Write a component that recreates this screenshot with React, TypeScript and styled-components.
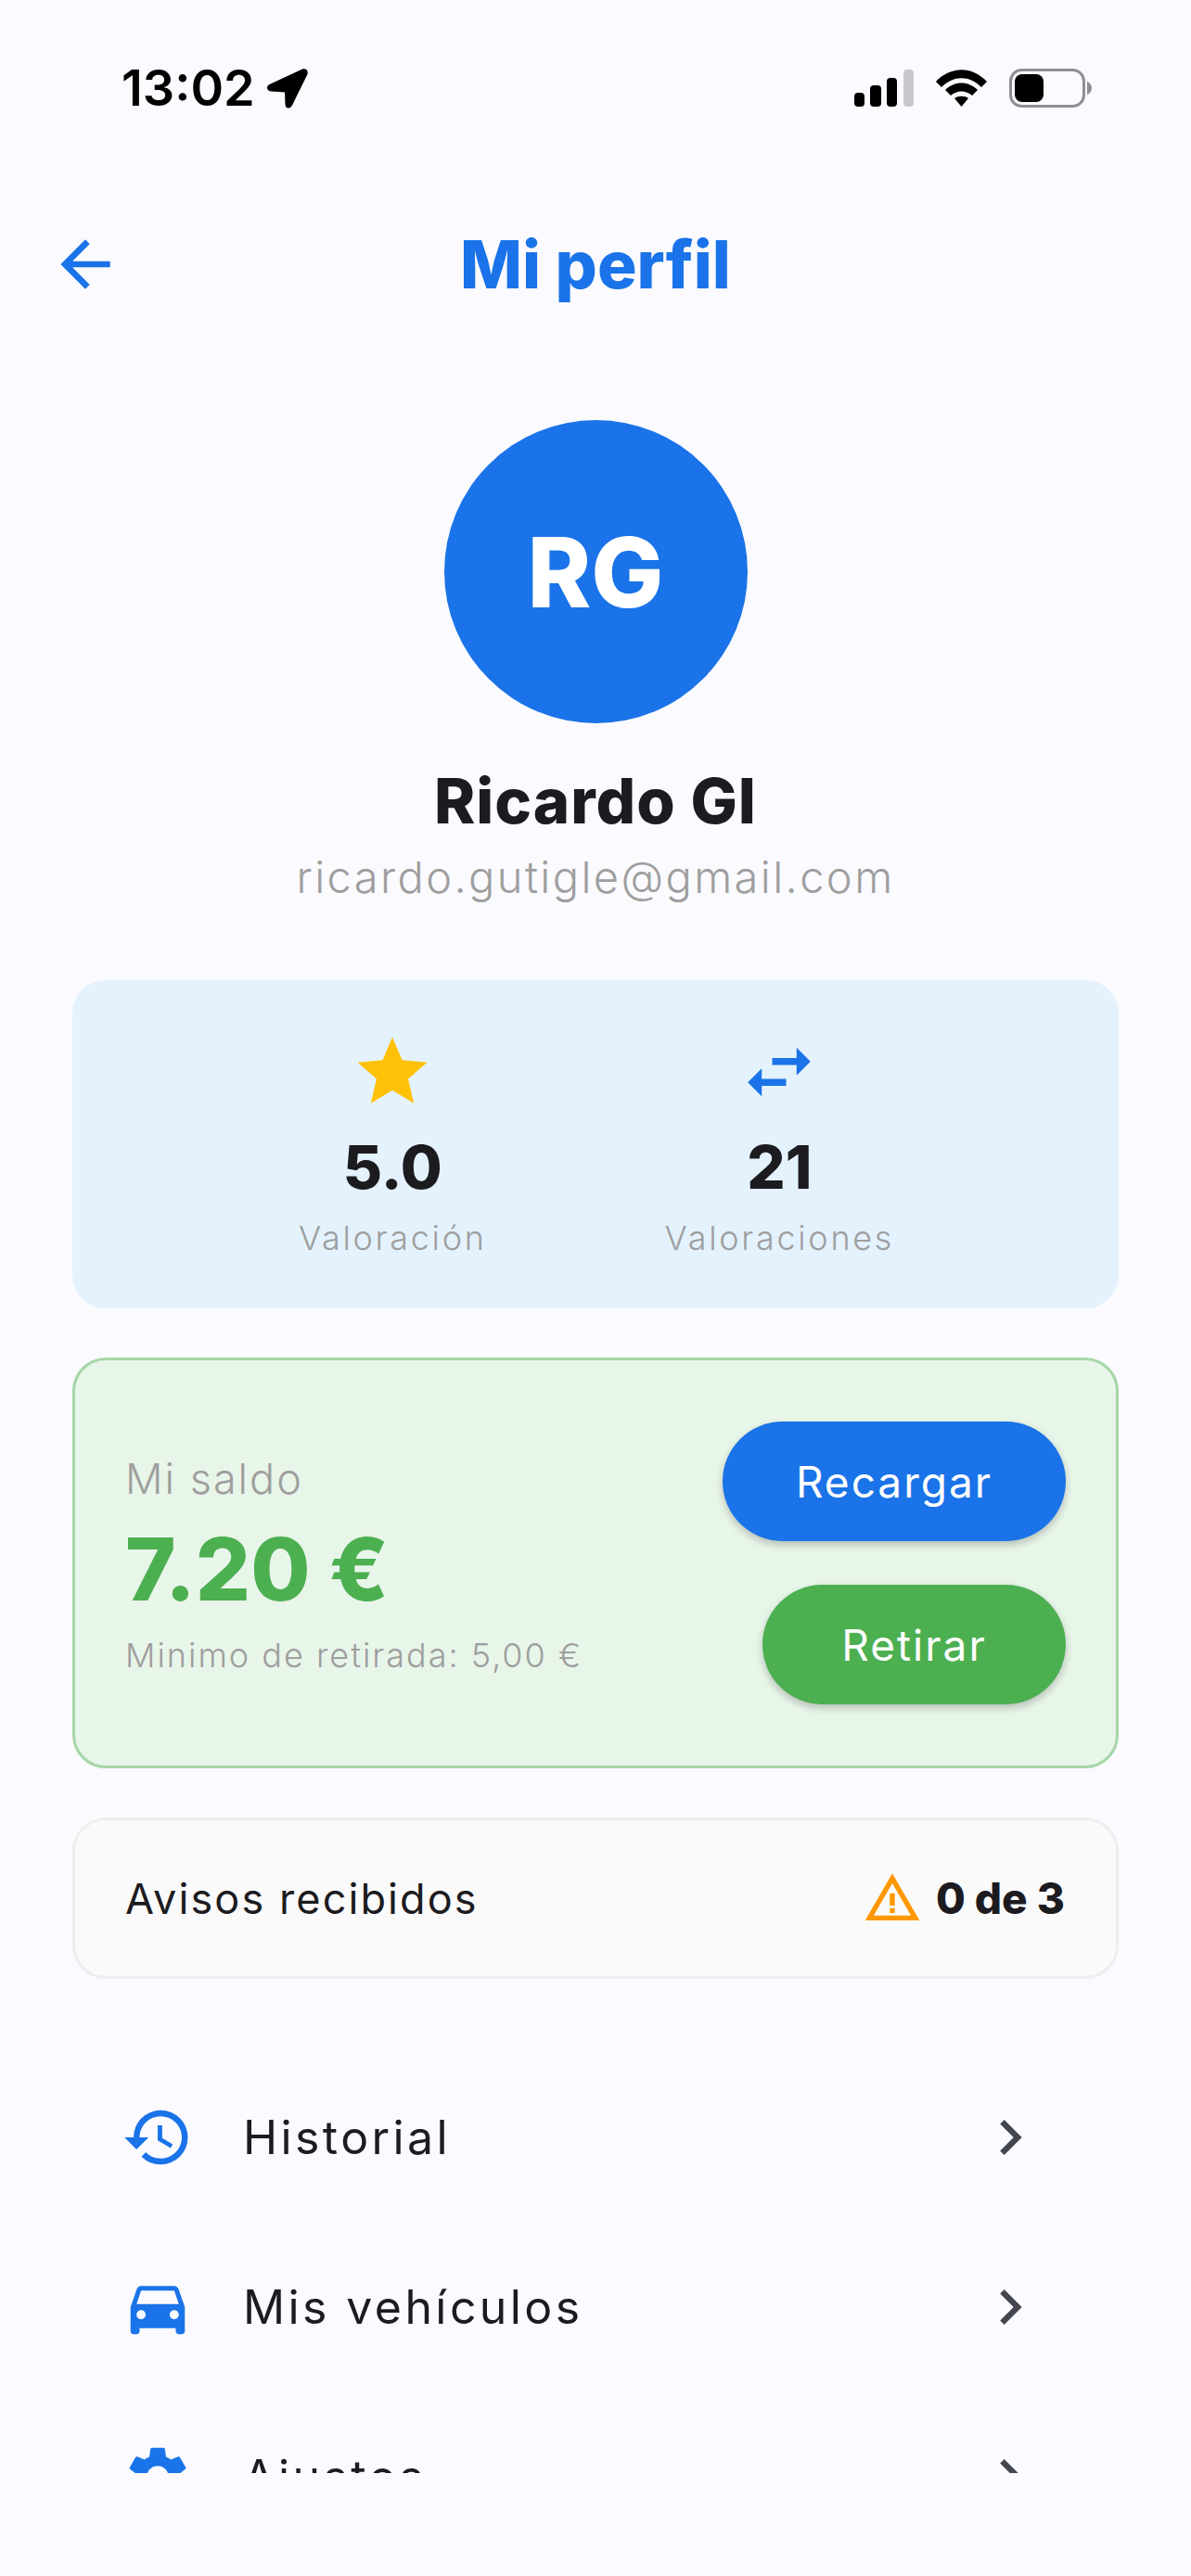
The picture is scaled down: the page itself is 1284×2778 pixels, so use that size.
import styled, { createGlobalStyle } from "styled-components";
import {
  MdArrowBack,
  MdChevronRight,
  MdDirectionsCar,
  MdHistory,
  MdSettings,
  MdStar,
  MdSwapHoriz,
  MdWarningAmber,
} from "react-icons/md";

const BLUE = "#1a73e8";
const GREEN = "#4caf50";
const INK = "#1c1b1f";
const GREY = "#9e9e9e";

const GlobalStyle = createGlobalStyle`
  html, body {
    margin: 0;
    padding: 0;
    background: #fafaff;
  }
  * {
    box-sizing: border-box;
  }
`;

const Page = styled.div`
  width: 1284px;
  height: 2778px;
  background: #fafaff;
  font-family: Inter, "Noto Sans", sans-serif;
  color: ${INK};
  overflow: hidden;
`;

const StatusBar = styled.div`
  height: 190px;
  padding: 0 107px 0 131px;
  display: flex;
  align-items: center;
  justify-content: space-between;
`;

const Clock = styled.div`
  display: flex;
  align-items: center;
  gap: 13px;
  font-size: 54px;
  font-weight: 600;
  color: #000;
  line-height: 1;
`;

const StatusIcons = styled.div`
  display: flex;
  align-items: center;
  gap: 24px;
`;

const Header = styled.header`
  height: 190px;
  position: relative;
  display: flex;
  align-items: center;
  justify-content: center;
`;

const BackButton = styled.div`
  position: absolute;
  left: 52px;
  top: 55px;
  color: ${BLUE};
  display: flex;
`;

const Title = styled.h1`
  margin: 0;
  font-size: 71px;
  font-weight: 800;
  color: ${BLUE};
  line-height: 1;
`;

const Scroll = styled.main`
  height: 2287px;
  overflow: hidden;
  padding: 73px 78px 0;
`;

const Profile = styled.section`
  display: flex;
  flex-direction: column;
  align-items: center;
`;

const Avatar = styled.div`
  width: 327px;
  height: 327px;
  border-radius: 50%;
  background: ${BLUE};
  color: #fff;
  font-size: 104px;
  font-weight: 800;
  display: flex;
  align-items: center;
  justify-content: center;
  line-height: 1;
`;

const Name = styled.div`
  margin-top: 51px;
  font-size: 67px;
  font-weight: 800;
  line-height: 66px;
  letter-spacing: 1px;
`;

const Email = styled.div`
  margin-top: 19px;
  font-size: 47px;
  line-height: 60px;
  font-weight: 300;
  color: ${GREY};
  letter-spacing: 2.4px;
`;

const StatsCard = styled.section`
  margin-top: 81px;
  height: 354px;
  border-radius: 36px;
  background: #e3f2fd;
  display: flex;
  justify-content: center;
  align-items: flex-start;
  gap: 192px;
  padding: 54px 0 0 2px;
`;

const Stat = styled.div`
  display: flex;
  flex-direction: column;
  align-items: center;
`;

const StatValue = styled.div`
  margin-top: 23px;
  font-size: 65px;
  font-weight: 800;
  line-height: 70px;
`;

const StatLabel = styled.div`
  margin-top: 19px;
  font-size: 36px;
  line-height: 44px;
  font-weight: 300;
  color: ${GREY};
  letter-spacing: 2.7px;
`;

const BalanceCard = styled.section`
  margin-top: 53px;
  height: 443px;
  border-radius: 36px;
  border: 3px solid #a5d6a7;
  background: #e8f5e9;
  padding: 66px 54px;
  display: flex;
  justify-content: space-between;
  align-items: center;
`;

const BalanceInfo = styled.div`
  display: flex;
  flex-direction: column;
  padding-top: 4px;
`;

const BalanceLabel = styled.div`
  font-size: 45px;
  line-height: 52px;
  font-weight: 300;
  color: ${GREY};
  letter-spacing: 2px;
`;

const BalanceAmount = styled.div`
  margin-top: 21px;
  font-size: 93px;
  line-height: 100px;
  font-weight: 800;
  color: ${GREEN};
`;

const BalanceNote = styled.div`
  margin-top: 21px;
  font-size: 36px;
  line-height: 44px;
  font-weight: 300;
  color: ${GREY};
  letter-spacing: 2px;
`;

const BalanceActions = styled.div`
  display: flex;
  flex-direction: column;
  align-items: flex-end;
  gap: 47px;
`;

const PillButton = styled.button<{ $bg: string; $width: number }>`
  width: ${(p) => p.$width}px;
  height: 129px;
  border: none;
  border-radius: 65px;
  background: ${(p) => p.$bg};
  color: #fff;
  font-family: inherit;
  font-size: 46px;
  font-weight: 400;
  letter-spacing: 2px;
  box-shadow: 0 4px 8px rgba(0, 0, 0, 0.22);
`;

const NoticeCard = styled.section`
  margin-top: 53px;
  height: 174px;
  border-radius: 36px;
  border: 3px solid #eeeeee;
  background: #fafafa;
  padding: 0 55px 0 54px;
  display: flex;
  align-items: center;
  justify-content: space-between;
`;

const NoticeLabel = styled.div`
  font-size: 45px;
  font-weight: 400;
  letter-spacing: 2.1px;
`;

const NoticeCount = styled.div`
  display: flex;
  align-items: center;
  gap: 15px;
  font-size: 46px;
  font-weight: 800;
  color: #ff9800;
`;

const NoticeNumber = styled.span`
  color: ${INK};
`;

const Menu = styled.nav`
  margin-top: 79px;
  display: flex;
  flex-direction: column;
`;

const MenuRow = styled.div`
  height: 183px;
  display: flex;
  align-items: center;
  padding: 0 0 0 53px;
  flex-shrink: 0;
`;

const MenuIcon = styled.div`
  width: 78px;
  color: ${BLUE};
  display: flex;
`;

const MenuLabel = styled.div`
  margin-left: 53px;
  flex: 1;
  font-size: 50px;
  font-weight: 400;
  letter-spacing: 3.4px;
`;

const MenuChevron = styled.div`
  margin-right: 79px;
  color: #44464f;
  display: flex;
`;

const menuItems = [
  { label: "Historial", icon: <MdHistory size={78} /> },
  { label: "Mis vehículos", icon: <MdDirectionsCar size={78} /> },
  { label: "Ajustes", icon: <MdSettings size={78} /> },
];

function SignalIcon() {
  return (
    <svg width="64" height="40" viewBox="0 0 64 40">
      <rect x="0" y="25" width="11" height="15" rx="4" fill="#000" />
      <rect x="17" y="17" width="12" height="23" rx="4" fill="#000" />
      <rect x="35" y="9" width="11" height="31" rx="4" fill="#000" />
      <rect x="53" y="0" width="11" height="40" rx="4" fill="#c8c8cc" />
    </svg>
  );
}

function WifiIcon() {
  return (
    <svg width="55" height="40" viewBox="0 0 55 40">
      <path d="M0 13 C16 -4 39 -4 55 13 L49 19 C36 6 19 6 6 19 Z" fill="#000" />
      <path d="M10 22 C20 12 35 12 45 22 L39 28 C32 22 23 22 16 28 Z" fill="#000" />
      <path d="M20 31 C24 28 31 28 35 31 L27.5 40 Z" fill="#000" />
    </svg>
  );
}

function BatteryIcon() {
  return (
    <svg width="89" height="42" viewBox="0 0 89 42">
      <rect x="1.5" y="1.5" width="79" height="39" rx="12" fill="none" stroke="#8e8e93" strokeWidth="3" />
      <rect x="6" y="6" width="31" height="30" rx="8" fill="#000" />
      <path d="M84 14 C87 15 89 18 89 21 C89 24 87 27 84 28 Z" fill="#8e8e93" />
    </svg>
  );
}

function LocationIcon() {
  return (
    <svg width="44" height="43" viewBox="0 0 44 43">
      <path
        d="M38 0.5 C42 -0.5 44.5 2 43.5 6 L27 39.5 C25 44 19.5 43.5 19.5 38.5 L19 25.5 L4 24.5 C-0.5 24 -1.5 19 2.5 17 Z"
        fill="#000"
      />
    </svg>
  );
}

export default function App() {
  return (
    <Page>
      <GlobalStyle />
      <StatusBar>
        <Clock>
          13:02
          <LocationIcon />
        </Clock>
        <StatusIcons>
          <SignalIcon />
          <WifiIcon />
          <BatteryIcon />
        </StatusIcons>
      </StatusBar>
      <Header>
        <BackButton>
          <MdArrowBack size={80} />
        </BackButton>
        <Title>Mi perfil</Title>
      </Header>
      <Scroll>
        <Profile>
          <Avatar>RG</Avatar>
          <Name>Ricardo GI</Name>
          <Email>ricardo.gutigle@gmail.com</Email>
        </Profile>
        <StatsCard>
          <Stat>
            <MdStar size={90} color="#ffc107" />
            <StatValue>5.0</StatValue>
            <StatLabel>Valoración</StatLabel>
          </Stat>
          <Stat>
            <MdSwapHoriz size={90} color={BLUE} />
            <StatValue>21</StatValue>
            <StatLabel>Valoraciones</StatLabel>
          </Stat>
        </StatsCard>
        <BalanceCard>
          <BalanceInfo>
            <BalanceLabel>Mi saldo</BalanceLabel>
            <BalanceAmount>7.20 €</BalanceAmount>
            <BalanceNote>Minimo de retirada: 5,00 €</BalanceNote>
          </BalanceInfo>
          <BalanceActions>
            <PillButton $bg={BLUE} $width={370}>
              Recargar
            </PillButton>
            <PillButton $bg={GREEN} $width={327}>
              Retirar
            </PillButton>
          </BalanceActions>
        </BalanceCard>
        <NoticeCard>
          <NoticeLabel>Avisos recibidos</NoticeLabel>
          <NoticeCount>
            <MdWarningAmber size={64} />
            <NoticeNumber>0 de 3</NoticeNumber>
          </NoticeCount>
        </NoticeCard>
        <Menu>
          {menuItems.map((item) => (
            <MenuRow key={item.label}>
              <MenuIcon>{item.icon}</MenuIcon>
              <MenuLabel>{item.label}</MenuLabel>
              <MenuChevron>
                <MdChevronRight size={76} />
              </MenuChevron>
            </MenuRow>
          ))}
        </Menu>
      </Scroll>
    </Page>
  );
}
